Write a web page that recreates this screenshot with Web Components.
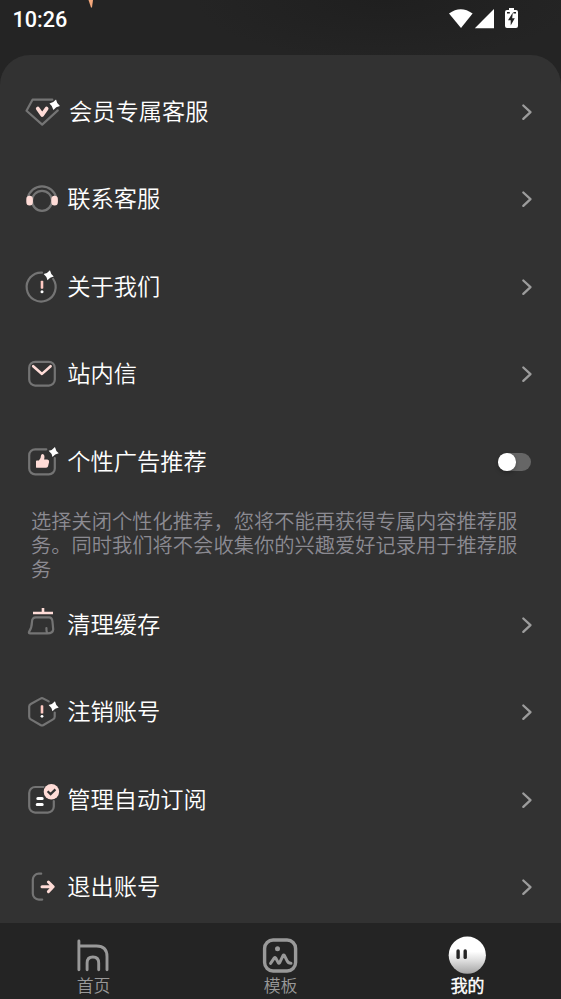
<!DOCTYPE html>
<html lang="zh-CN">
<head>
<meta charset="utf-8">
<title>我的</title>
<style>
html,body{margin:0;height:100%;background:#242424;overflow:hidden}
body{font-family:"Noto Sans CJK SC","Noto Sans",sans-serif;font-weight:350;color:#fff}
</style>
</head>
<body>
<app-screen>
  <status-bar slot="status">10:26</status-bar>
  <menu-row icon="vip" style="--gap:7px">会员专属客服</menu-row>
  <menu-row icon="headset">联系客服</menu-row>
  <menu-row icon="about">关于我们</menu-row>
  <menu-row icon="mail">站内信</menu-row>
  <menu-row icon="thumb" toggle>个性广告推荐</menu-row>
  <menu-note>选择关闭个性化推荐，您将不能再获得专属内容推荐服务。同时我们将不会收集你的兴趣爱好记录用于推荐服务</menu-note>
  <menu-row icon="broom">清理缓存</menu-row>
  <menu-row icon="cancel">注销账号</menu-row>
  <menu-row icon="subs">管理自动订阅</menu-row>
  <menu-row icon="logout">退出账号</menu-row>
  <tab-bar slot="tabs">
    <tab-item icon="home">首页</tab-item>
    <tab-item icon="template">模板</tab-item>
    <tab-item icon="mine" active>我的</tab-item>
  </tab-bar>
</app-screen>
<script>
const star = (x, y, r = 5.2) =>
  `<path transform="translate(${x} ${y}) rotate(14) scale(${r})" fill="#fff" d="M0-1Q.3-.3 1 0Q.3.3 0 1Q-.3.3-1 0Q-.3-.3 0-1Z"/>`;

// Row icons: the vertical origin is the row's centre line.
const ROW_ICONS = {
  vip: `<path class="g" d="M52.3-12.3H32.5L26.5-1.3L42.2 12.6L57.8-1.6"/>
    <path class="p" stroke-width="3.8" d="M37.8-3.4L42.2 2.9L46.6-3.4"/>${star(54.7,-7.3,5.4)}`,
  headset: `<path class="g" d="M27.7-1A14.6 14.6 0 0 1 56.3-1"/><circle class="g" cx="42" cy="1.8" r="10"/>
    <rect x="26.3" y="-3.2" width="6.6" height="9.8" rx="3.2" ry="3.6" fill="#ffdcd7"/><rect x="51.3" y="-3.2" width="6.6" height="9.8" rx="3.2" ry="3.6" fill="#ffdcd7"/>`,
  about: `<path class="g" d="M42-14.4A14.5 14.5 0 1 0 53.2-8"/>
    <rect x="40.7" y="-6.3" width="2.6" height="8" rx=".7" fill="#ffc9c2"/><circle cx="42" cy="4.7" r="1.5" fill="#fff"/>${star(48.7,-11.7)}`,
  mail: `<rect class="g" x="29.2" y="-12.2" width="25.6" height="23.8" rx="6"/>
    <path class="p" stroke-width="2.6" d="M33.2-7.8L42-.1L50.6-7.8"/>`,
  thumb: `<path class="g" d="M46.3-12.7H35.2A6 6 0 0 0 29.2-6.7V6.4A6 6 0 0 0 35.2 12.4H48.8A6 6 0 0 0 54.8 6.4V-4"/>
    <path fill="#ffdcd7" d="M36.8-1.6H38.9Q41-3 41-6.4Q41.2-8.1 42.8-8Q44.6-7.6 44.5-5L44.1-2.6H47.3Q49.4-2.3 49.1 0L48 4.4Q47.3 5.8 45.8 5.8H36.8Q36 5.7 36 4.9V-.8Q36-1.5 36.8-1.6Z"/>${star(53.7,-10)}`,
  broom: `<path class="p" style="stroke-linecap:butt" stroke-width="2.6" d="M33-12H53M43-17V-12"/>
    <path class="g" d="M47.3 8.3H30Q28.5 8.3 29 7Q31.8 3.2 32-3.2Q32-7.7 36-7.7H49.2Q52-7.7 52.4-4Q52.8-.5 53.2 4.4Q53 8.3 47.3 8.3Q46.2 6 46.4 3"/>`,
  cancel: `<path class="g" d="M48.7-10.6L43.5-13.4Q42-14.2 40.5-13.4L30.8-8Q29.2-7 29.2-5.4V4.8Q29.2 6.5 30.8 7.4L40.5 13Q42 13.8 43.5 13L53 7.4Q54.7 6.5 54.7 4.8V.5"/>
    <rect x="40.7" y="-6.7" width="2.6" height="8.3" rx=".7" fill="#ffc9c2"/><circle cx="42" cy="4.3" r="1.4" fill="#fff"/>${star(53.7,-5.8)}`,
  subs: `<path class="g" d="M43.5-13H35.2A6 6 0 0 0 29.2-7V6.6A6 6 0 0 0 35.2 12.6H47.8A6 6 0 0 0 53.8 6.6V1"/>
    <path stroke="#fff" stroke-width="3" stroke-linecap="round" d="M37.8-1.5H42.2M37.2 4.4H42.2"/>
    <circle cx="51.4" cy="-8.2" r="7.7" fill="#ffdcd7"/><path fill="none" stroke="#333" stroke-width="2.2" d="M47.6-8.8L50.6-5.9L55.4-10.6"/>`,
  logout: `<path class="g" d="M41.2-13.3H38.8A6 6 0 0 0 32.8-7.3V6.6A6 6 0 0 0 38.8 12.6H42.2"/>
    <path class="p" stroke-width="3" d="M42-.2H53M48.4-5L53.2-.2L48.4 4.6"/>`
};

// Tab icons share a 40x40 box.
const TAB_ICONS = {
  home: `<path fill="none" stroke="#999" stroke-width="2.9" stroke-linecap="round" stroke-linejoin="round" d="M5.9 6V34.8M5.9 11H23.5Q34 11 34 21.5V34.8M14.1 34.8V28Q14.1 22 19.9 22Q25.7 22 25.7 28V34.8"/>`,
  template: `<rect x="4.6" y="5" width="31" height="31" rx="8.5" fill="none" stroke="#999" stroke-width="3.4"/><circle cx="17.5" cy="13.7" r="2.5" fill="#999"/>
    <path fill="none" stroke="#999" stroke-width="3" stroke-linecap="round" stroke-linejoin="round" d="M10.6 28.4L14.3 22.9Q15 22.3 15.7 23L18.2 27.6Q19 28.8 19.8 27.4L23 20.6Q23.8 19.4 24.6 20.8L27 25.7Q28.1 28.3 31 28.3"/>`,
  mine: `<defs><linearGradient id="f" x2="0" y2="1"><stop offset=".4" stop-color="#fff"/><stop offset=".65" stop-color="#ddd"/><stop offset="1" stop-color="#a4a4a4"/></linearGradient></defs>
    <circle cx="20.3" cy="20.2" r="18.6" fill="url(#f)"/><rect x="9.4" y="14.3" width="3.4" height="9.8" rx="1.7" fill="#252525"/><rect x="16.5" y="14.3" width="3.4" height="9.8" rx="1.7" fill="#252525"/>`
};

class BaseElement extends HTMLElement {
  constructor() {
    super();
    this.attachShadow({ mode: 'open' });
  }
  connectedCallback() { this.shadowRoot.innerHTML = this.render(); }
}

customElements.define('app-screen', class extends BaseElement {
  render() {
    return `<style>
      :host{display:flex;flex-direction:column;width:561px;height:999px;overflow:hidden;background:radial-gradient(ellipse 190px 60px at 385px 0,#1f1f1f,#242424)}
      main{flex:1;min-height:0;box-sizing:border-box;padding-top:13.5px;background:#323232;border-radius:30px 30px 0 0;overflow:hidden}
    </style><slot name="status"></slot><main><slot></slot></main><slot name="tabs"></slot>`;
  }
});

customElements.define('status-bar', class extends BaseElement {
  render() {
    return `<style>
      :host{display:flex;justify-content:space-between;height:54.5px;flex:none;font:500 21.6px/39px Roboto,sans-serif}
      span{padding-left:12.5px}
      svg{display:block}
    </style><span><slot></slot></span>
    <svg width="473" height="40" viewBox="88 0 473 40">
      <path fill="#f4a87c" d="M88.5 0H93L92 7.5H91Z"/>
      <path fill="#fff" d="M449 13.6Q460.7 4.8 472.6 13.6L461 28Z"/>
      <path fill="#fff" d="M494 9V28.3H474.8Z"/>
      <path fill="#fff" d="M509 8H514V10H516Q518 10 518 12V26Q518 28 516 28H507Q505 28 505 26V12Q505 10 507 10H509Z"/>
      <path fill="#242424" d="M512.8 12.5L508 20.3H510.7V25.4L514.8 18.2H512.2ZM507 12H509.8V13.4H507ZM513.4 12H516V13.4H513.4Z"/>
    </svg>`;
  }
});

customElements.define('menu-row', class extends BaseElement {
  render() {
    const end = this.hasAttribute('toggle')
      ? '<toggle-switch></toggle-switch>'
      : '<svg width="14" height="20" viewBox="0 0 14 20"><path fill="none" stroke="#9c9c9c" stroke-width="2.3" stroke-linecap="round" stroke-linejoin="round" d="M4.3 3.5L11.5 10.2L4.3 16.9"/></svg>';
    return `<style>
      :host{display:flex;align-items:center;height:87.5px;padding:0 30px 0 20px;box-sizing:border-box;font-size:23.25px;line-height:34px}
      svg{display:block;flex:none}
      .label{flex:1;margin-left:var(--gap,5.3px);padding-bottom:4px;white-space:nowrap}
      .g{fill:none;stroke:#747474;stroke-width:2.2;stroke-linecap:round;stroke-linejoin:round}
      .p{fill:none;stroke:#ffdcd7;stroke-linecap:round;stroke-linejoin:round}
      .end{display:flex;margin-right:-2px}
      :host([toggle]) .end{margin:0}
    </style>
    <svg width="42" height="50" viewBox="20 -25 42 50">${ROW_ICONS[this.getAttribute('icon')]}</svg>
    <span class="label"><slot></slot></span><span class="end">${end}</span>`;
  }
});

customElements.define('toggle-switch', class extends BaseElement {
  render() {
    return `<style>
      :host{display:block;width:33px;height:17.6px;border-radius:9px;background:#666}
      i{display:block;width:17.6px;height:17.6px;border-radius:50%;background:#fff;box-shadow:0 2px 4px #0004}
    </style><i></i>`;
  }
});

customElements.define('menu-note', class extends BaseElement {
  render() {
    return `<style>
      :host{display:block;box-sizing:border-box;height:75.5px;padding:2px 38px 0 31px;font-size:20.27px;line-height:24px;color:#8c8b92;word-break:break-all}
    </style><slot></slot>`;
  }
});

customElements.define('tab-bar', class extends BaseElement {
  render() {
    return `<style>
      :host{display:grid;grid-template-columns:repeat(3,1fr);flex:none;height:76.5px;background:#242424}
    </style><slot></slot>`;
  }
});

customElements.define('tab-item', class extends BaseElement {
  render() {
    return `<style>
      :host{display:flex;flex-direction:column;align-items:center;padding:12.5px .4px 0 0;font-size:16.9px;line-height:20px;color:#999}
      :host([active]){color:#fff;-webkit-text-stroke:.5px #fff}
      svg{display:block}
      span{padding-left:.6px}
    </style><svg width="40" height="40" viewBox="0 0 40 40">${TAB_ICONS[this.getAttribute('icon')]}</svg><span><slot></slot></span>`;
  }
});
</script>
</body>
</html>
